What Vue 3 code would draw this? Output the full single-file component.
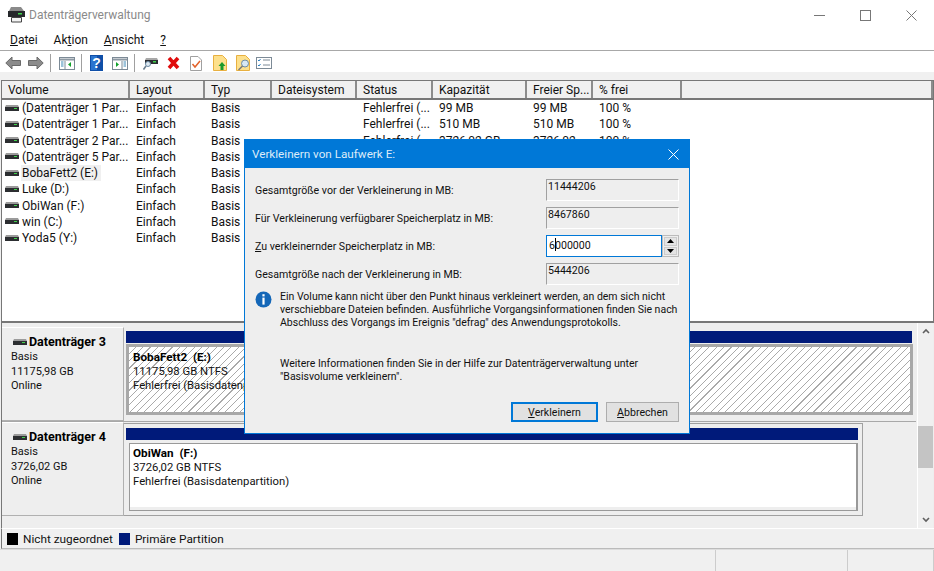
<template>
  <div class="window">
    <header class="titlebar">
      <svg class="app-icon" width="17" height="16" viewBox="0 0 17 16">
        <path d="M3 0h10l3 4H1z" fill="#8a8a8a" />
        <rect x="0" y="4" width="17" height="6" fill="#26282b" />
        <rect x="10" y="6" width="4" height="1.500" fill="#3fd24a" />
        <path d="M3.500 10.500h10v4.500h-10z" fill="#f4f4f4" stroke="#444" stroke-width="1" />
      </svg>
      <span class="title">Datenträgerverwaltung</span>
      <div class="caption-btns">
        <svg width="11" height="11" viewBox="0 0 11 11"><path d="M0 5.500h11" stroke="#777" /></svg>
        <svg width="11" height="11" viewBox="0 0 11 11"><rect x=".5" y=".5" width="10" height="10" fill="none" stroke="#777" /></svg>
        <svg width="11" height="11" viewBox="0 0 11 11"><path d="M.5.5l10 10M10.500.5l-10 10" stroke="#777" /></svg>
      </div>
    </header>

    <nav class="menubar">
      <span><u>D</u>atei</span>
      <span>Ak<u>t</u>ion</span>
      <span><u>A</u>nsicht</span>
      <span><u>?</u></span>
    </nav>

    <div class="toolbar">
      <svg width="16" height="14" viewBox="0 0 16 14"><path d="M.8 7L7 1v3.500h8.500v5H7V13z" fill="#8c8c8c" stroke="#6a6a6a" /></svg>
      <svg class="m-n1" width="16" height="14" viewBox="0 0 16 14"><path d="M15.200 7L9 1v3.500H.5v5H9V13z" fill="#8c8c8c" stroke="#6a6a6a" /></svg>
      <i class="sep"></i>
      <svg width="16" height="13" viewBox="0 0 16 13"><rect x=".5" y=".5" width="15" height="12" fill="#fff" stroke="#7c8a96" /><path d="M1 2.500h14" stroke="#8d99a3" stroke-width="2" /><path d="M6 4v8" stroke="#7c8a96" /><path d="M2 5h2.500M2 7h2.500M2 9h2.500" stroke="#3b87b5" /><path d="M12 5v5L9 7.500z" fill="#12a12c" /></svg>
      <i class="sep"></i>
      <svg width="13" height="16" viewBox="0 0 13 16"><rect width="13" height="16" fill="#0f4fa8" /><rect x="1" y="1" width="6" height="14" fill="#2b74cf" /><text x="6.500" y="13" text-anchor="middle" class="help-mark">?</text></svg>
      <svg class="m-1" width="16" height="13" viewBox="0 0 16 13"><rect x=".5" y=".5" width="15" height="12" fill="#fff" stroke="#7c8a96" /><path d="M1 2.500h14" stroke="#8d99a3" stroke-width="2" /><path d="M10 4v8" stroke="#7c8a96" /><path d="M11.500 5H14M11.500 7H14M11.500 9H14" stroke="#3b87b5" /><path d="M4 5v5l3-2.500z" fill="#12a12c" /></svg>
      <i class="sep"></i>
      <svg width="15" height="14" viewBox="0 0 15 14"><path d="M3 2h11l1 2H2z" fill="#a8a8a8" /><rect x="2" y="4" width="13" height="4" fill="#2a2c30" /><rect x="10" y="5" width="3" height="1.500" fill="#3fd24a" /><circle cx="5" cy="8" r="2.500" fill="#dfeaf2" stroke="#6b8aa5" /><path d="M3 10l-2.500 3.500" stroke="#6b7f90" stroke-width="1.600" /></svg>
      <svg class="m-1" width="13" height="14" viewBox="0 0 13 14"><path d="M2 2l9 10M11 2l-9 10" stroke="#e00c0c" stroke-width="3.600" /></svg>
      <svg class="m-2" width="12" height="15" viewBox="0 0 12 15"><path d="M.5.500h7.500l3.500 3.500v10.500H.5z" fill="#fff" stroke="#a0a0a0" /><path d="M2.500 8l2.500 3L10 5" fill="none" stroke="#e2622a" stroke-width="1.500" /></svg>
      <svg class="m-3" width="14" height="16" viewBox="0 0 14 16"><path d="M.5.500h9l4 4v11H.5z" fill="#fde08c" stroke="#e8b040" /><path d="M9 7l3.500 4H10.500v4h-3v-4H5.500z" fill="#1b9a2c" /></svg>
      <svg class="m-1" width="14" height="16" viewBox="0 0 14 16"><path d="M.5.500h9l4 4v11H.5z" fill="#fde08c" stroke="#e8b040" /><circle cx="9" cy="8.500" r="3.500" fill="#d8e8f4" stroke="#6c8ba5" /><path d="M6.500 11l-4 4" stroke="#777" stroke-width="1.500" /></svg>
      <svg class="m-n2" width="16" height="12" viewBox="0 0 16 12"><rect x=".5" y=".5" width="15" height="11" fill="#fff" stroke="#7c8a96" /><path d="M2 3l1 1 1.500-2M2 8l1 1 1.500-2" fill="none" stroke="#2a7fc0" /><path d="M7 3h7M7 8h7" stroke="#7c8a96" /></svg>
    </div>

    <div class="band"></div>

    <section class="list">
      <div class="row head">
        <span v-for="c in columns" :key="c">{{ c }}</span>
        <span></span>
      </div>
      <div class="rows">
        <div v-for="v in volumes" :key="v.name + v.cap" class="row">
          <span class="vol-cell">
            <svg width="14" height="7" viewBox="0 0 14 7"><path d="M1 0h12l1 2H0z" fill="#9b9b9b" /><rect y="2" width="14" height="4" fill="#2c2e31" /><rect x="9" y="3" width="3" height="1" fill="#3fd24a" /></svg>
            <b :class="{ picked: v.name.startsWith('BobaFett') }">{{ v.name }}</b>
          </span>
          <span>Einfach</span>
          <span>Basis</span>
          <span></span>
          <span>{{ v.status }}</span>
          <span>{{ v.cap }}</span>
          <span>{{ v.free }}</span>
          <span>{{ v.pct }}</span>
        </div>
      </div>
    </section>

    <section class="disks">
      <div class="disk-pane">
        <div v-for="d in disks" :key="d.title" class="disk" :class="d.cls">
          <div class="disk-label">
            <div class="disk-name">
              <svg width="14" height="7" viewBox="0 0 14 7"><path d="M1 0h12l1 2H0z" fill="#9b9b9b" /><rect y="2" width="14" height="4" fill="#2c2e31" /><rect x="9" y="3" width="3" height="1" fill="#3fd24a" /></svg>
              <strong>{{ d.title }}</strong>
            </div>
            <div>Basis</div>
            <div>{{ d.size }}</div>
            <div>Online</div>
          </div>
          <div class="partition-wrap">
            <div class="strip"></div>
            <div class="partition">
              <div class="partition-text">
                <strong>{{ d.part }}</strong>
                <div>{{ d.size }} NTFS</div>
                <div>Fehlerfrei (Basisdatenpartition)</div>
              </div>
            </div>
          </div>
        </div>
      </div>
      <div class="scrollbar">
        <svg width="8" height="6" viewBox="0 0 8 6"><path d="M1 5l3-3 3 3" fill="none" stroke="#606060" stroke-width="1.600" /></svg>
        <div class="thumb"></div>
        <svg width="8" height="6" viewBox="0 0 8 6"><path d="M1 1l3 3 3-3" fill="none" stroke="#606060" stroke-width="1.600" /></svg>
      </div>
    </section>

    <footer class="legend">
      <i class="swatch black"></i><span>Nicht zugeordnet</span>
      <i class="swatch navy"></i><span>Primäre Partition</span>
    </footer>

    <div class="statusbar">
      <span></span><span></span><span></span>
    </div>

    <div class="dialog">
      <div class="dialog-title">
        <span>Verkleinern von Laufwerk E:</span>
        <svg width="11" height="11" viewBox="0 0 11 11"><path d="M.5.5l10 10M10.500.5l-10 10" stroke="#fff" /></svg>
      </div>
      <div class="dialog-body">
        <div class="form-grid">
          <label>Gesamtgröße vor der Verkleinerung in MB:</label>
          <div class="readonly">11444206</div>
          <label>Für Verkleinerung verfügbarer Speicherplatz in MB:</label>
          <div class="readonly">8467860</div>
          <label><u>Z</u>u verkleinernder Speicherplatz in MB:</label>
          <div class="spin">
            <div class="spin-input">6<i class="caret"></i>000000</div>
            <div class="spin-btns">
              <button type="button"><svg width="7" height="4" viewBox="0 0 7 4"><path d="M3.500 0L7 4H0z" /></svg></button>
              <button type="button"><svg width="7" height="4" viewBox="0 0 7 4"><path d="M3.500 4L7 0H0z" /></svg></button>
            </div>
          </div>
          <label>Gesamtgröße nach der Verkleinerung in MB:</label>
          <div class="readonly">5444206</div>
        </div>

        <div class="info">
          <svg width="17" height="17" viewBox="0 0 17 17">
            <circle cx="8.500" cy="8.500" r="8" fill="#1467b8" />
            <rect x="7.400" y="3.200" width="2.200" height="2.200" fill="#fff" />
            <rect x="7.400" y="6.600" width="2.200" height="7" fill="#fff" />
          </svg>
          <div class="info-text">
            <p>Ein Volume kann nicht über den Punkt hinaus verkleinert werden, an dem sich nicht<br>verschiebbare Dateien befinden. Ausführliche Vorgangsinformationen finden Sie nach<br>Abschluss des Vorgangs im Ereignis "defrag" des Anwendungsprotokolls.</p>
            <p>Weitere Informationen finden Sie in der Hilfe zur Datenträgerverwaltung unter<br>"Basisvolume verkleinern".</p>
          </div>
        </div>

        <div class="actions">
          <button type="button" class="btn primary"><u>V</u>erkleinern</button>
          <button type="button" class="btn"><u>A</u>bbrechen</button>
        </div>
      </div>
    </div>
  </div>
</template>

<script setup>
const columns = ['Volume', 'Layout', 'Typ', 'Dateisystem', 'Status', 'Kapazität', 'Freier Sp...', '% frei']

const ok = 'Fehlerfrei (...'
const volumes = [
  { name: '(Datenträger 1 Par...', status: ok, cap: '99 MB', free: '99 MB', pct: '100 %' },
  { name: '(Datenträger 1 Par...', status: ok, cap: '510 MB', free: '510 MB', pct: '100 %' },
  { name: '(Datenträger 2 Par...', status: ok, cap: '3726,02 GB', free: '3726,02 ', pct: '100 %' },
  { name: '(Datenträger 5 Par...', status: '', cap: '', free: '', pct: '' },
  { name: 'BobaFett2 (E:)', status: '', cap: '', free: '', pct: '' },
  { name: 'Luke (D:)', status: '', cap: '', free: '', pct: '' },
  { name: 'ObiWan (F:)', status: '', cap: '', free: '', pct: '' },
  { name: 'win (C:)', status: '', cap: '', free: '', pct: '' },
  { name: 'Yoda5 (Y:)', status: '', cap: '', free: '', pct: '' }
]

const disks = [
  { title: 'Datenträger 3', size: '11175,98 GB', part: 'BobaFett2  (E:)', cls: 'hatched' },
  { title: 'Datenträger 4', size: '3726,02 GB', part: 'ObiWan  (F:)', cls: 'plain' }
]
</script>

<style scoped>
.window {
  position: relative;
  width: 934px;
  height: 571px;
  display: flex;
  flex-direction: column;
  overflow: hidden;
  background: #f0f0f0;
  color: #111;
  font-family: Roboto, "Liberation Sans", sans-serif;
  font-size: 12px;
}

u {
  text-underline-offset: 1px;
}

.titlebar {
  height: 30px;
  flex: none;
  display: flex;
  align-items: center;
  padding-left: 8px;
  background: #fff;
}

.app-icon {
  margin-right: 4px;
}

.title {
  color: #8a8a8a;
}

.caption-btns {
  margin-left: auto;
  display: flex;
  gap: 35px;
  padding-right: 17px;
}

.menubar {
  height: 21px;
  flex: none;
  box-sizing: border-box;
  display: flex;
  align-items: center;
  gap: 16px;
  padding-left: 10px;
  background: #fff;
  border-bottom: 1px solid #a8a8a8;
}

.toolbar {
  height: 21px;
  flex: none;
  box-sizing: border-box;
  display: flex;
  align-items: center;
  gap: 8px;
  padding: 3px 0 0 5px;
  background: #fff;
}

.m-1 { margin-left: 1px; }
.m-2 { margin-left: 2px; }
.m-3 { margin-left: 3px; }
.m-n1 { margin-left: -1px; }
.m-n2 { margin-left: -2px; }

.sep {
  width: 1px;
  height: 18px;
  margin-left: -2px;
  background: #a0a0a0;
}

.help-mark {
  font: bold 14px "Liberation Sans", sans-serif;
  fill: #fff;
}

.band {
  height: 8px;
  flex: none;
  background: #f0f0f0;
}

.list {
  height: 243px;
  flex: none;
  margin-left: 1px;
  background: #fff;
  border-left: 1px solid #777;
  border-right: 1px solid #777;
  border-top: 1px solid #777;
  border-bottom: 2px solid #777;
  box-sizing: border-box;
}

.row {
  display: grid;
  grid-template-columns: 128px 75px 67px 85px 76px 94px 66px 89px 1fr;
  height: 16.25px;
  line-height: 16px;
  white-space: nowrap;
}

.row > span {
  padding-left: 6px;
  overflow: hidden;
}

.row.head {
  height: 17px;
  line-height: 18px;
  background: #f0f0f0;
  border-bottom: 2px solid #777;
}

.row.head > span {
  border-right: 2px solid #8c8c8c;
  box-sizing: border-box;
}

.row .vol-cell {
  display: flex;
  align-items: center;
  gap: 2px;
  padding-left: 3px;
}

.vol-cell b {
  font-weight: 400;
  padding: 0 1px;
}

.vol-cell b.picked {
  width: 80px;
  box-sizing: border-box;
  background: #f0f0f0;
}

.disks {
  height: 205px;
  flex: none;
  display: flex;
  margin-left: 1px;
  border-left: 1px solid #777;
  background: #eee;
}

.disk-pane {
  flex: 1;
  padding-top: 4px;
}

.disk {
  display: flex;
  height: 94px;
  margin-right: 1px;
}

.disk.hatched {
  border-bottom: 1px solid #a8a8a8;
}

.disk-label {
  width: 122px;
  flex: none;
  padding: 6px 0 0 9px;
  box-sizing: border-box;
  border-top: 1px solid #fff;
  border-right: 1px solid #b0b0b0;
  border-bottom: 1px solid #b0b0b0;
  font-size: 11px;
  line-height: 14.5px;
}

.disk-name {
  display: flex;
  align-items: center;
  gap: 2px;
  margin-left: 2px;
  font-size: 12.5px;
  line-height: 16px;
  color: #000;
}

.partition-wrap {
  flex: 1;
  padding: 4px 4px 0 2px;
  box-sizing: border-box;
}

.strip {
  height: 12px;
  background: #001a7a;
}

.hatched .partition {
  height: 71px;
  margin-top: 1px;
  margin-right: -1px;
  padding: 3px;
  box-sizing: border-box;
  border: 3px solid #a8a8a8;
  background: repeating-linear-gradient(135deg, #fff 0, #fff 4.400px, #aaa 4.400px, #aaa 5.200px);
}

.plain .partition-wrap {
  flex: none;
  width: 739px;
  height: 93px;
  margin-top: 1px;
  padding: 4px 4px 0 2px;
  border: 1px solid #a0a0a0;
  border-left: 0;
}

.plain .partition {
  height: 68px;
  margin: 3px 0 0 3px;
  padding: 2px;
  box-sizing: border-box;
  border: 1px solid #999;
  border-right-width: 2px;
  background: #fff;
  box-shadow: inset 0 -3px 0 #eee;
}

.partition-text {
  padding: 0 0 0 1px;
  font-size: 11.300px;
  line-height: 14.500px;
  white-space: nowrap;
}

.partition-text strong {
  display: block;
  font-size: 11.700px;
  color: #000;
  white-space: pre;
}

.scrollbar {
  width: 16px;
  margin-right: 1px;
  flex: none;
  display: flex;
  flex-direction: column;
  align-items: center;
  padding: 5px 0;
  box-sizing: border-box;
  background: #f0f0f0;
  border-left: 1px solid #fff;
}

.thumb {
  width: 100%;
  height: 42px;
  margin: 92px 0 auto;
  background: #c4c4c4;
}

.legend {
  height: 21px;
  flex: none;
  box-sizing: border-box;
  margin-left: 1px;
  display: flex;
  align-items: center;
  gap: 5px;
  padding-left: 5px;
  font-size: 11.800px;
  border-top: 1px solid #fff;
  border-left: 1px solid #777;
  border-bottom: 1px solid #bbb;
  background: #f0f0f0;
}

.swatch {
  width: 11px;
  height: 12px;
}

.black {
  background: #000;
}

.navy {
  margin-left: 1px;
  background: #001a7a;
}

.statusbar {
  flex: 1;
  display: grid;
  grid-template-columns: 716px 132px 1fr;
  border-top: 1px solid #ddd;
}

.statusbar span {
  border-right: 1px solid #ccc;
}

.dialog {
  position: absolute;
  left: 244px;
  top: 139px;
  width: 446px;
  height: 295px;
  box-sizing: border-box;
  border: 1px solid #0078d7;
  background: #eee;
  display: flex;
  flex-direction: column;
}

.dialog-title {
  height: 28px;
  flex: none;
  display: flex;
  align-items: center;
  justify-content: space-between;
  padding: 0 10px 0 7px;
  background: #0078d7;
  color: #dcebf8;
  font-size: 11.700px;
}

.dialog-body {
  flex: 1;
  display: flex;
  flex-direction: column;
  padding: 11px 10px;
  font-size: 10.600px;
}

.form-grid {
  display: grid;
  grid-template-columns: 1fr 133px;
  grid-auto-rows: 22px;
  row-gap: 6px;
  align-items: center;
}

.readonly {
  height: 22px;
  box-sizing: border-box;
  padding-left: 1px;
  line-height: 13px;
  border: 1px solid #fff;
  border-top-color: #a0a0a0;
  border-left-color: #a0a0a0;
}

.spin {
  display: flex;
  height: 22px;
}

.spin-input {
  flex: 1;
  box-sizing: border-box;
  padding-left: 2px;
  line-height: 20px;
  background: #fff;
  border: 1px solid #0078d7;
  white-space: nowrap;
}

.caret {
  display: inline-block;
  width: 1px;
  height: 13px;
  margin-right: -1px;
  vertical-align: -2px;
  background: #000;
}

.spin-btns {
  width: 17px;
  display: flex;
  flex-direction: column;
  gap: 1px;
  padding: 1px;
  box-sizing: border-box;
  border: 1px solid #bbb;
}

.spin-btns button {
  flex: 1;
  min-height: 0;
  padding: 0;
  display: flex;
  align-items: center;
  justify-content: center;
  border: 1px solid #ccc;
  background: #e4e4e4;
}

.info {
  display: flex;
  gap: 8px;
  margin-top: 6px;
}

.info svg {
  flex: none;
}

.info-text {
  flex: 1;
  font-size: 10.500px;
  line-height: 12.750px;
  white-space: nowrap;
}

.info-text p {
  margin: 0 0 29px;
}

.info-text p:last-child {
  margin: 0;
}

.actions {
  margin-top: auto;
  display: flex;
  justify-content: flex-end;
  gap: 8px;
}

.btn {
  height: 20px;
  padding: 0;
  width: 73px;
  box-sizing: border-box;
  font: inherit;
  color: #111;
  border: 1px solid #adadad;
  background: #e1e1e1;
}

.btn.primary {
  width: 87px;
  border: 2px solid #0078d7;
}
</style>

<style>
html, body {
  margin: 0;
  background: #f0f0f0;
}
</style>
